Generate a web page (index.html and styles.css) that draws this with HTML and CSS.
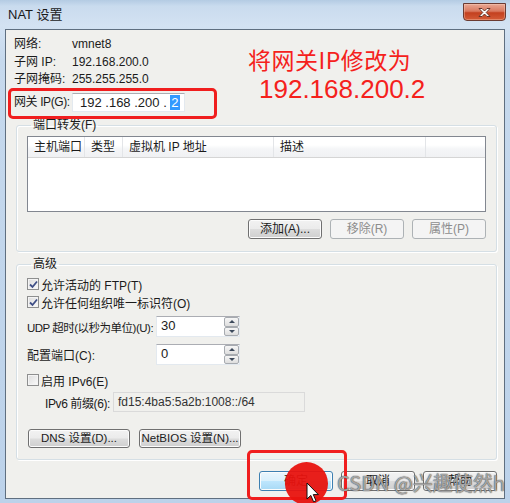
FILE: index.html
```html
<!DOCTYPE html>
<html lang="zh-CN">
<head>
<meta charset="utf-8">
<title>NAT 设置</title>
<link rel="stylesheet" href="styles.css">
</head>
<body>
<div class="window">
  <div class="titlebar">
    <span class="title">NAT 设置</span>
    <div class="close">
      <svg width="43" height="17" viewBox="0 0 43 17">
        <path d="M16 4.5 L19 4.5 L21.5 7 L24 4.5 L27 4.5 L23.2 8.5 L27 12.5 L24 12.5 L21.5 10 L19 12.5 L16 12.5 L19.8 8.5 Z" fill="#fff" stroke="#5a2a20" stroke-width="0.9" stroke-linejoin="round"/>
      </svg>
    </div>
  </div>
  <div class="client">
    <div class="info">
      <div class="irow"><span class="ilbl">网络:</span><span>vmnet8</span></div>
      <div class="irow"><span class="ilbl">子网 IP:</span><span>192.168.200.0</span></div>
      <div class="irow"><span class="ilbl">子网掩码:</span><span>255.255.255.0</span></div>
      <div class="irow gw"><span class="ilbl tight">网关 IP(G):</span><div class="ipbox">192 .168 .200 . <span class="sel">2</span></div></div>
    </div>

    <fieldset class="group g1">
      <legend>端口转发(F)</legend>
      <div class="list">
        <div class="lhead">
          <div class="col c1">主机端口</div>
          <div class="col c2">类型</div>
          <div class="col c3">虚拟机 IP 地址</div>
          <div class="col c4">描述</div>
          <div class="col c5"></div>
        </div>
      </div>
      <div class="btnrow">
        <button class="btn">添加(A)...</button>
        <button class="btn" disabled>移除(R)</button>
        <button class="btn" disabled>属性(P)</button>
      </div>
    </fieldset>

    <fieldset class="group g2">
      <legend>高级</legend>
      <div class="chk"><span class="box on"><svg width="9" height="9" viewBox="0 0 9 9"><path d="M1 4.5 L3.5 7 L8 1.5" fill="none" stroke="#3f4f86" stroke-width="1.8"/></svg></span>允许活动的 FTP(T)</div>
      <div class="chk"><span class="box on"><svg width="9" height="9" viewBox="0 0 9 9"><path d="M1 4.5 L3.5 7 L8 1.5" fill="none" stroke="#3f4f86" stroke-width="1.8"/></svg></span>允许任何组织唯一标识符(O)</div>
      <div class="frow udp">
        <span class="flbl narrow">UDP 超时(以秒为单位)(U):</span>
        <div class="spin"><span class="sval">30</span><div class="sbtns"><div class="sb"><i class="up"></i></div><div class="sb"><i class="dn"></i></div></div></div>
      </div>
      <div class="frow port">
        <span class="flbl">配置端口(C):</span>
        <div class="spin"><span class="sval">0</span><div class="sbtns"><div class="sb"><i class="up"></i></div><div class="sb"><i class="dn"></i></div></div></div>
      </div>
      <div class="chk v6"><span class="box"></span>启用 IPv6(E)</div>
      <div class="frow pfx">
        <span class="plbl tight">IPv6 前缀(6):</span>
        <div class="pfield">fd15:4ba5:5a2b:1008::/64</div>
      </div>
      <div class="btnrow left">
        <button class="btn wide">DNS 设置(D)...</button>
        <button class="btn wide">NetBIOS 设置(N)...</button>
      </div>
    </fieldset>

    <div class="btnrow bottom">
      <button class="btn def">确定</button>
      <button class="btn">取消</button>
      <button class="btn">帮助</button>
    </div>
  </div>

  <div class="note">
    <div class="n1">将网关IP修改为</div>
    <div class="n2">192.168.200.2</div>
  </div>
  <div class="mark m1"></div>
  <div class="mark m2"></div>
  <div class="dot"></div>
  <svg class="cursor" width="14" height="22" viewBox="0 0 14 22">
    <path d="M1 1 L1 17 L4.8 13.4 L7.6 19.8 L10 18.8 L7.3 12.6 L12.4 12.6 Z" fill="#fff" stroke="#111" stroke-width="1" stroke-linejoin="round"/>
  </svg>
  <div class="wm">CSDN @兴趣使然h</div>
</div>
</body>
</html>
```

FILE: styles.css
```css
* { box-sizing: border-box; }
html, body { margin: 0; padding: 0; }
body {
  width: 510px;
  height: 503px;
  overflow: hidden;
  font-family: "Liberation Sans", "Noto Sans CJK SC", sans-serif;
  font-size: 12px;
  color: #1b1b1b;
  white-space: nowrap;
}
.window {
  position: relative;
  width: 510px;
  height: 503px;
  display: flex;
  flex-direction: column;
  background: linear-gradient(180deg, #b4cbe3 0px, #c9dbee 6px, #d3e2f2 26px, #c6d9ed 60px, #bcd2ea 100%);
}
.titlebar {
  height: 29px;
  flex: none;
  display: flex;
  align-items: flex-start;
  padding-left: 8px;
}
.title {
  margin-top: 7px;
  font-size: 13px;
  line-height: 16px;
  color: #1a1a1a;
}
.close {
  margin-left: auto;
  margin-right: 4px;
  margin-top: 3px;
  width: 43px;
  height: 18px;
  border: 1px solid #6b3b32;
  border-radius: 0 0 4px 4px;
  background: linear-gradient(180deg, #e9a894 0%, #d9795f 45%, #c3401f 55%, #d45b37 100%);
  box-shadow: inset 0 0 0 1px rgba(255,220,200,0.35);
  overflow: hidden;
}
.close svg { display: block; margin: 0 0 0 -1px; }

.client {
  flex: 1;
  min-height: 0;
  margin: 0 5px 4px 5px;
  border: 1px solid #5f6f80;
  background: #f0f0ed;
  display: flex;
  flex-direction: column;
}

.tight { letter-spacing: -0.4px; }
.narrow { font-size: 11.5px; letter-spacing: -0.5px; }

/* info rows */
.info { padding: 6px 0 0 8px; }
.irow { display: flex; align-items: center; height: 17px; line-height: 17px; }
.irow + .irow { margin-top: 0.5px; }
.ilbl { width: 58px; flex: none; }
.irow.gw { height: 20px; margin-top: 4px; }
.ipbox {
  width: 113px;
  height: 19px;
  flex: none;
  background: #fff;
  border: 1px solid #e3e9ef;
  border-top-color: #abadb3;
  padding-left: 7px;
  font-size: 13px;
  line-height: 17px;
  white-space: pre;
}
.sel { background: #3399ff; color: #fff; padding: 0 1px; }

/* group boxes */
.group {
  margin: 0;
  border: 1px solid #d5dfe5;
  border-radius: 3px;
  box-shadow: inset 1px 1px 0 #fff, 1px 1px 0 #fff;
  padding: 0 10px;
  min-width: 0;
}
.group legend {
  padding: 0 2px;
  margin-left: 4px;
  height: 14px;
  line-height: 14px;
  font-size: 12px;
}
.g1 { margin: 6px 7px 0 10px; padding-top: 4px; padding-bottom: 12px; }
.g2 { margin: 5px 7px 0 10px; padding-top: 4px; padding-bottom: 11px; }

.list {
  height: 76px;
  background: #fff;
  border: 1px solid #828790;
}
.lhead {
  display: flex;
  height: 21px;
  background: linear-gradient(180deg, #ffffff 0%, #ffffff 40%, #f4f5f7 60%, #f0f1f3 100%);
  border-bottom: 1px solid #d5d5d5;
}
.col {
  line-height: 20px;
  padding-left: 6px;
  border-right: 1px solid #e3e5e8;
}
.c1 { width: 57px; }
.c2 { width: 38px; }
.c3 { width: 151px; }
.c4 { width: 152px; }
.c5 { flex: 1; border-right: none; }

.btnrow { display: flex; justify-content: flex-end; gap: 8px; margin-top: 7px; }
.btnrow.left { justify-content: flex-start; gap: 9px; margin-top: 17px; padding-left: 1px; }
.btnrow.bottom { margin: 11px 7px 0 0; gap: 8px; }
.btn {
  width: 74px;
  height: 20px;
  padding: 0;
  margin: 0;
  font-family: inherit;
  font-size: 12px;
  color: #1b1b1b;
  border: 1px solid #707070;
  border-radius: 3px;
  background: linear-gradient(180deg, #f2f2f2 0%, #ebebeb 49%, #dddddd 51%, #cfcfcf 100%);
  box-shadow: inset 0 0 0 1px #fcfcfc;
  line-height: 17px;
  white-space: nowrap;
  overflow: hidden;
}
.btn:disabled {
  border-color: #adb2b5;
  background: #f4f4f4;
  color: #8d8d8d;
  box-shadow: none;
}
.btn.wide { width: 102px; height: 19px; font-size: 11.5px; }
.btn.def {
  border-color: #3c7fb1;
  background: linear-gradient(180deg, #eaf6fd 0%, #d9f0fc 49%, #bee6fd 51%, #a7d9f5 100%);
}

/* checkboxes */
.chk { display: flex; align-items: center; height: 18px; }
.box {
  width: 12px;
  height: 12px;
  flex: none;
  border: 1px solid #8e8f8f;
  background: linear-gradient(135deg, #dcdcdc, #fbfbfb);
  margin-right: 2px;
  display: flex;
  align-items: center;
  justify-content: center;
  box-shadow: inset 0 0 0 1px #f4f4f4;
}
.box svg { display: block; }
.chk.v6 { margin-top: 6px; }

/* field rows */
.frow { display: flex; align-items: center; }
.frow.udp { margin-top: 5px; }
.frow.port { margin-top: 7px; }
.flbl { width: 129px; flex: none; }
.spin {
  width: 84px;
  height: 21px;
  flex: none;
  display: flex;
  background: #fff;
  border: 1px solid #e3e9ef;
  border-top-color: #abadb3;
}
.sval { flex: 1; padding-left: 4px; line-height: 18px; font-size: 13px; }
.sbtns { width: 15px; display: flex; flex-direction: column; }
.sb {
  flex: 1;
  border: 1px solid #a7abb0;
  border-radius: 2px;
  background: linear-gradient(180deg, #f6f6f6, #dedede);
  display: flex;
  align-items: center;
  justify-content: center;
}
.sb i { width: 0; height: 0; border-left: 3px solid transparent; border-right: 3px solid transparent; }
.sb i.up { border-bottom: 3px solid #3d4a5c; }
.sb i.dn { border-top: 3px solid #3d4a5c; }

.frow.pfx { margin-top: 3px; padding-left: 18px; }
.plbl { width: 68px; flex: none; }
.pfield {
  width: 192px;
  height: 20px;
  flex: none;
  border: 1px solid #dadada;
  background: #f0f0ed;
  padding-left: 4px;
  line-height: 18px;
  color: #333;
}

/* annotation overlays */
.note {
  position: absolute;
  left: 248px;
  top: 44px;
  color: #f5211c;
}
.n1 {
  font-family: "Noto Sans CJK SC", sans-serif;
  font-size: 23px;
  line-height: 30px;
  letter-spacing: 0.5px;
}
.n2 {
  font-family: "Liberation Sans", sans-serif;
  font-size: 26px;
  line-height: 30px;
  margin-left: 11px;
}
.mark {
  position: absolute;
  border: 3px solid #f01e1e;
  border-radius: 5px;
}
.m1 { left: 8px; top: 88px; width: 209px; height: 31px; }
.m2 { left: 247px; top: 450px; width: 100px; height: 50px; }
.dot {
  position: absolute;
  left: 285px;
  top: 462px;
  width: 43px;
  height: 43px;
  border-radius: 50%;
  background: #e8130f;
  opacity: 0.95;
}
.cursor { position: absolute; left: 306px; top: 482px; }
.wm {
  position: absolute;
  left: 337px;
  top: 471px;
  font-family: "Noto Sans CJK SC", sans-serif;
  font-size: 20px;
  line-height: 24px;
  color: rgba(250, 250, 250, 0.55);
  text-shadow: 0 0 1px rgba(60,60,60,0.9), 0 0 1px rgba(60,60,60,0.9);
}
```
